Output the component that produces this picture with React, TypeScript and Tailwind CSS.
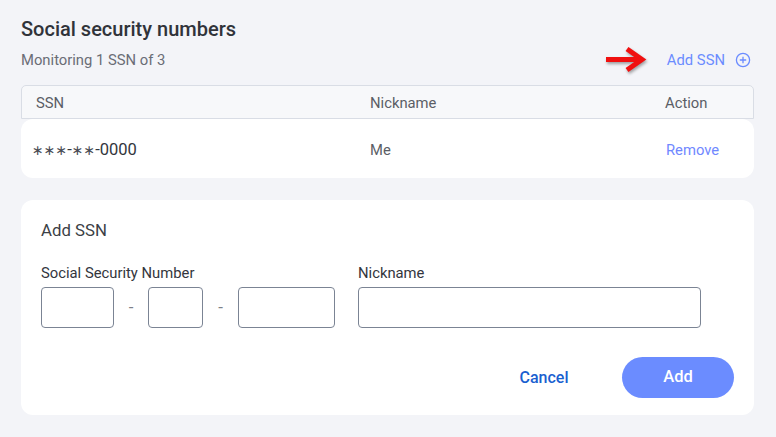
import React from "react";

function RedArrow() {
  return (
    <svg width="44" height="26" viewBox="0 0 44 26" className="drop-shadow-[1px_2px_1.5px_rgba(0,0,0,0.35)]">
      <path d="M2 12.5 H36" stroke="#f01010" strokeWidth="5" fill="none" />
      <path d="M23 2 L38 12.5 L23 23" stroke="#f01010" strokeWidth="5" fill="none" strokeLinejoin="miter" />
    </svg>
  );
}

function CirclePlus() {
  return (
    <svg width="16" height="16" viewBox="0 0 16 16" fill="none" stroke="#6b8cff" strokeWidth="1.3">
      <circle cx="8" cy="8" r="6.6" />
      <path d="M8 4.8 V11.2 M4.8 8 H11.2" />
    </svg>
  );
}

export default function App() {
  return (
    <div
      className="w-[776px] h-[437px] bg-[#f3f4f8] px-[21px] pt-[17px] overflow-hidden"
      style={{ fontFamily: "Roboto, 'DejaVu Sans', sans-serif" }}
    >
      <div className="w-[733px]">
        <h1 className="text-[20px] leading-[24px] font-medium text-[#30333a]">Social security numbers</h1>
        <div className="mt-[8px] h-[22px] flex items-center justify-between">
          <span className="text-[14.8px] text-[#6a6d76]">Monitoring 1 SSN of 3</span>
          <div className="flex items-center">
            <RedArrow />
            <span className="ml-[19px] text-[14.8px] text-[#6b8cff]">Add SSN</span>
            <span className="ml-[10px] mr-[3px] flex"><CirclePlus /></span>
          </div>
        </div>

        <div className="mt-[14px] h-[34px] bg-[#f7f8fa] border border-[#d9dde5] rounded-t-[5px] pl-[14px] pt-[2px] grid grid-cols-[334px_295px_1fr] items-center text-[14.8px] text-[#5b5e66]">
          <span>SSN</span>
          <span>Nickname</span>
          <span>Action</span>
        </div>
        <div className="h-[59px] bg-white rounded-[12px] pl-[11px] pt-[3px] grid grid-cols-[338px_296px_1fr] items-center">
          <span className="text-[16.5px] text-[#33363d]">
            <span className="text-[14px] text-[#4a4d55]">∗∗∗</span>-<span className="text-[14px] text-[#4a4d55]">∗∗</span>-0000
          </span>
          <span className="text-[14.8px] text-[#5b5e66]">Me</span>
          <span className="text-[14.8px] text-[#7088ff]">Remove</span>
        </div>

        <div className="mt-[22px] h-[215px] bg-white rounded-[12px] px-[20px] pt-[20px]">
          <div className="text-[16.8px] leading-[20px] text-[#3c3f46]">Add SSN</div>
          <div className="mt-[24px] flex">
            <div className="flex flex-col">
              <label className="text-[14.8px] leading-[18px] text-[#33363d]">Social Security Number</label>
              <div className="mt-[5px] flex items-center">
                <input className="w-[73px] h-[41px] border border-[#7b8494] rounded-[4px] outline-none" />
                <span className="w-[34px] text-center text-[#7d8088] text-[17px]">-</span>
                <input className="w-[55px] h-[41px] border border-[#7b8494] rounded-[4px] outline-none" />
                <span className="w-[35px] text-center text-[#7d8088] text-[17px]">-</span>
                <input className="w-[97px] h-[41px] border border-[#7b8494] rounded-[4px] outline-none" />
              </div>
            </div>
            <div className="ml-[23px] flex flex-col">
              <label className="text-[14.8px] leading-[18px] text-[#33363d]">Nickname</label>
              <input className="mt-[5px] w-[343px] h-[41px] border border-[#7b8494] rounded-[4px] outline-none" />
            </div>
          </div>
          <div className="mt-[29px] flex justify-end items-center">
            <button className="w-[102px] h-[41px] text-[16px] font-medium text-[#1a5fd0]">Cancel</button>
            <button className="ml-[27px] w-[112px] h-[41px] rounded-full bg-[#6b8cff] text-white text-[16.5px] font-medium">Add</button>
          </div>
        </div>
      </div>
    </div>
  );
}
